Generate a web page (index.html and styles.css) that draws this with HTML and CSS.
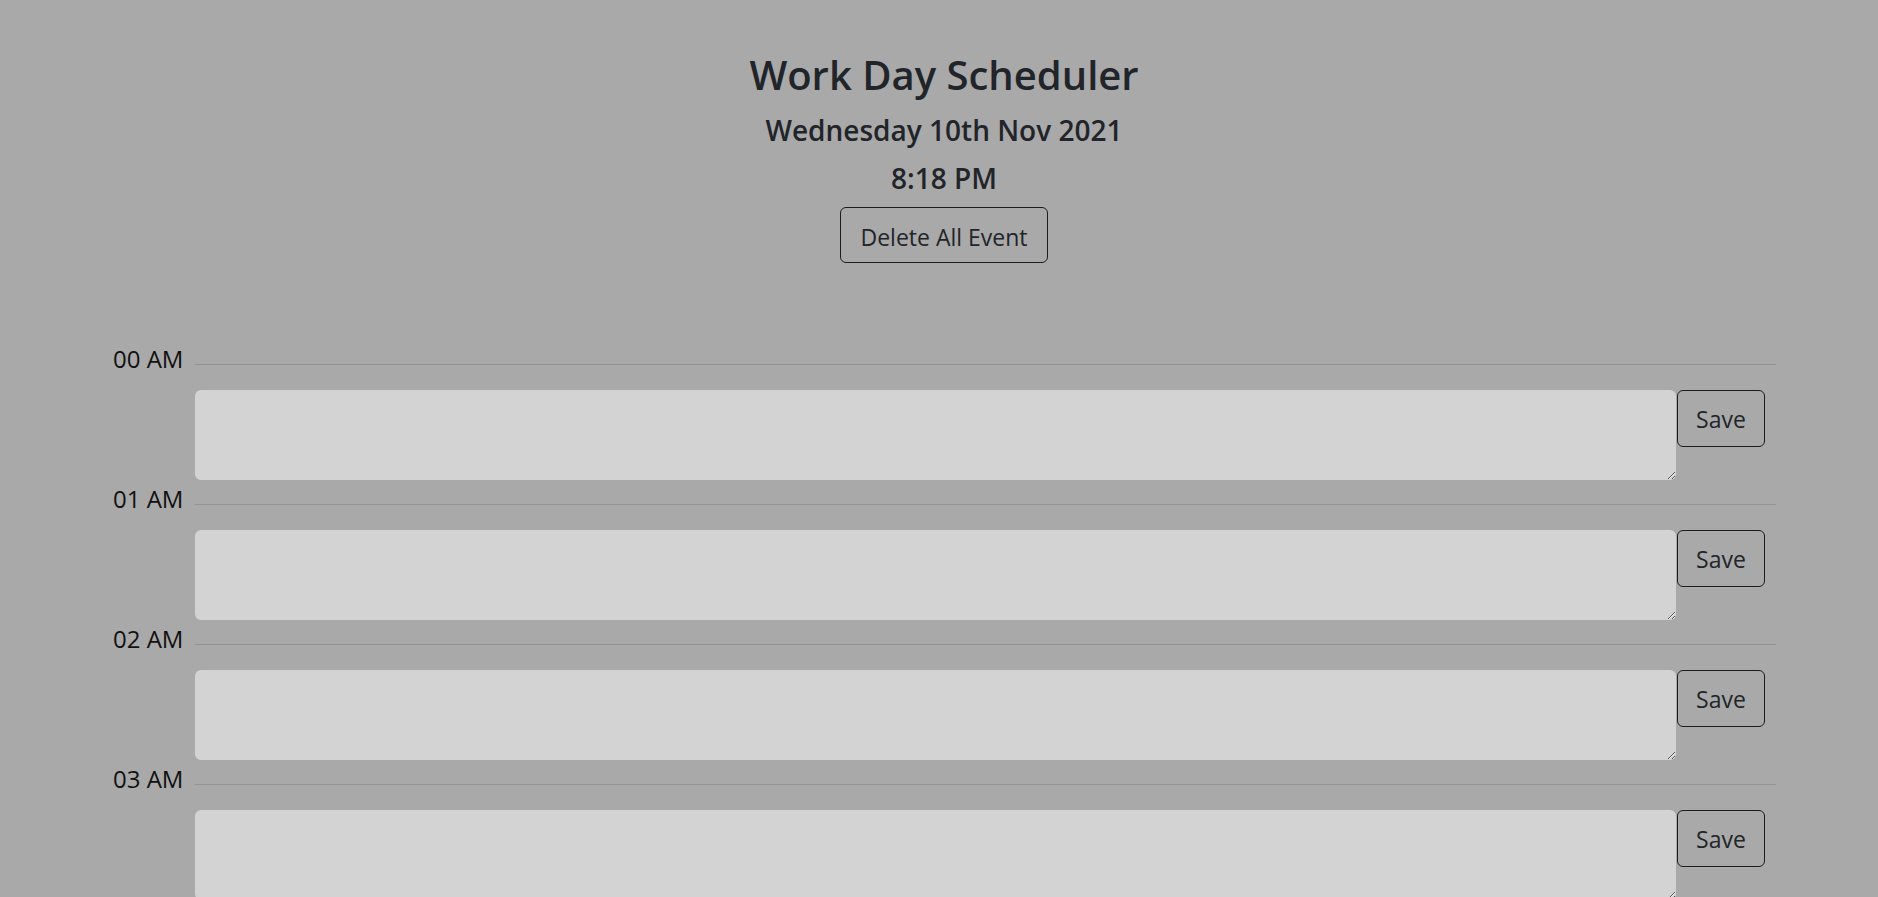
FILE: index.html
```html
<!DOCTYPE html>
<html lang="en">
<head>
<meta charset="utf-8">
<title>Work Day Scheduler</title>
<link rel="stylesheet" href="styles.css">
</head>
<body>
<header class="header">
  <h1 class="title">Work Day Scheduler</h1>
  <h3 class="date">Wednesday 10th Nov 2021</h3>
  <h3 class="clock">8:18 PM</h3>
  <button class="btn btn-delete">Delete All Event</button>
</header>
<main class="schedule">
  <section class="hour-row">
    <div class="hour-head"><span class="hour-label">00 AM</span><div class="hour-line"></div></div>
    <div class="hour-body"><textarea class="event"></textarea><button class="btn btn-save">Save</button></div>
  </section>
  <section class="hour-row">
    <div class="hour-head"><span class="hour-label">01 AM</span><div class="hour-line"></div></div>
    <div class="hour-body"><textarea class="event"></textarea><button class="btn btn-save">Save</button></div>
  </section>
  <section class="hour-row">
    <div class="hour-head"><span class="hour-label">02 AM</span><div class="hour-line"></div></div>
    <div class="hour-body"><textarea class="event"></textarea><button class="btn btn-save">Save</button></div>
  </section>
  <section class="hour-row">
    <div class="hour-head"><span class="hour-label">03 AM</span><div class="hour-line"></div></div>
    <div class="hour-body"><textarea class="event"></textarea><button class="btn btn-save">Save</button></div>
  </section>
</main>
</body>
</html>
```
FILE: styles.css
```css
html, body {
  margin: 0;
  padding: 0;
}
body {
  background: #a9a9a9;
  color: #212529;
  font-family: "Open Sans", "Noto Sans", sans-serif;
  overflow: hidden;
}
.header {
  display: flex;
  flex-direction: column;
  align-items: center;
  padding-left: 10px;
  padding-top: 51px;
}
.title {
  margin: 0;
  font-size: 40px;
  line-height: 48px;
  font-weight: 600;
}
.date {
  margin: 14px 0 0;
  font-size: 28px;
  line-height: 34px;
  font-weight: 600;
}
.clock {
  margin: 14px 0 0;
  font-size: 28px;
  line-height: 34px;
  font-weight: 600;
}
.btn {
  font-family: "Open Sans", "Noto Sans", sans-serif;
  background: transparent;
  color: #212529;
  border: 1px solid #1c1c1c;
  border-radius: 6px;
  cursor: pointer;
}
.btn-delete {
  margin-top: 12px;
  width: 208px;
  height: 56px;
  font-size: 23px;
  padding: 3px 0 0;
}
.schedule {
  padding: 83px 102px 0 113px;
}
.hour-row {
  display: flex;
  flex-direction: column;
}
.hour-head {
  display: flex;
  height: 26px;
}
.hour-label {
  width: 82px;
  font-size: 24px;
  line-height: 26px;
  white-space: nowrap;
  color: #111;
}
.hour-line {
  flex: 1;
  height: 1px;
  margin-top: 18px;
  background: #939393;
}
.hour-body {
  display: flex;
  align-items: flex-start;
  gap: 1px;
  margin: 18px 0 7px 82px;
}
.event {
  width: 1481px;
  height: 90px;
  box-sizing: border-box;
  border: none;
  border-radius: 6px;
  background: #d3d3d3;
  padding: 6px 12px;
  font-family: "Open Sans", sans-serif;
  font-size: 22px;
  margin: 0;
  display: block;
}
.btn-save {
  width: 88px;
  height: 57px;
  padding: 0;
  font-size: 23px;
}
.hour-row:not(:first-child) .hour-head {
  margin-top: -1px;
}
```
